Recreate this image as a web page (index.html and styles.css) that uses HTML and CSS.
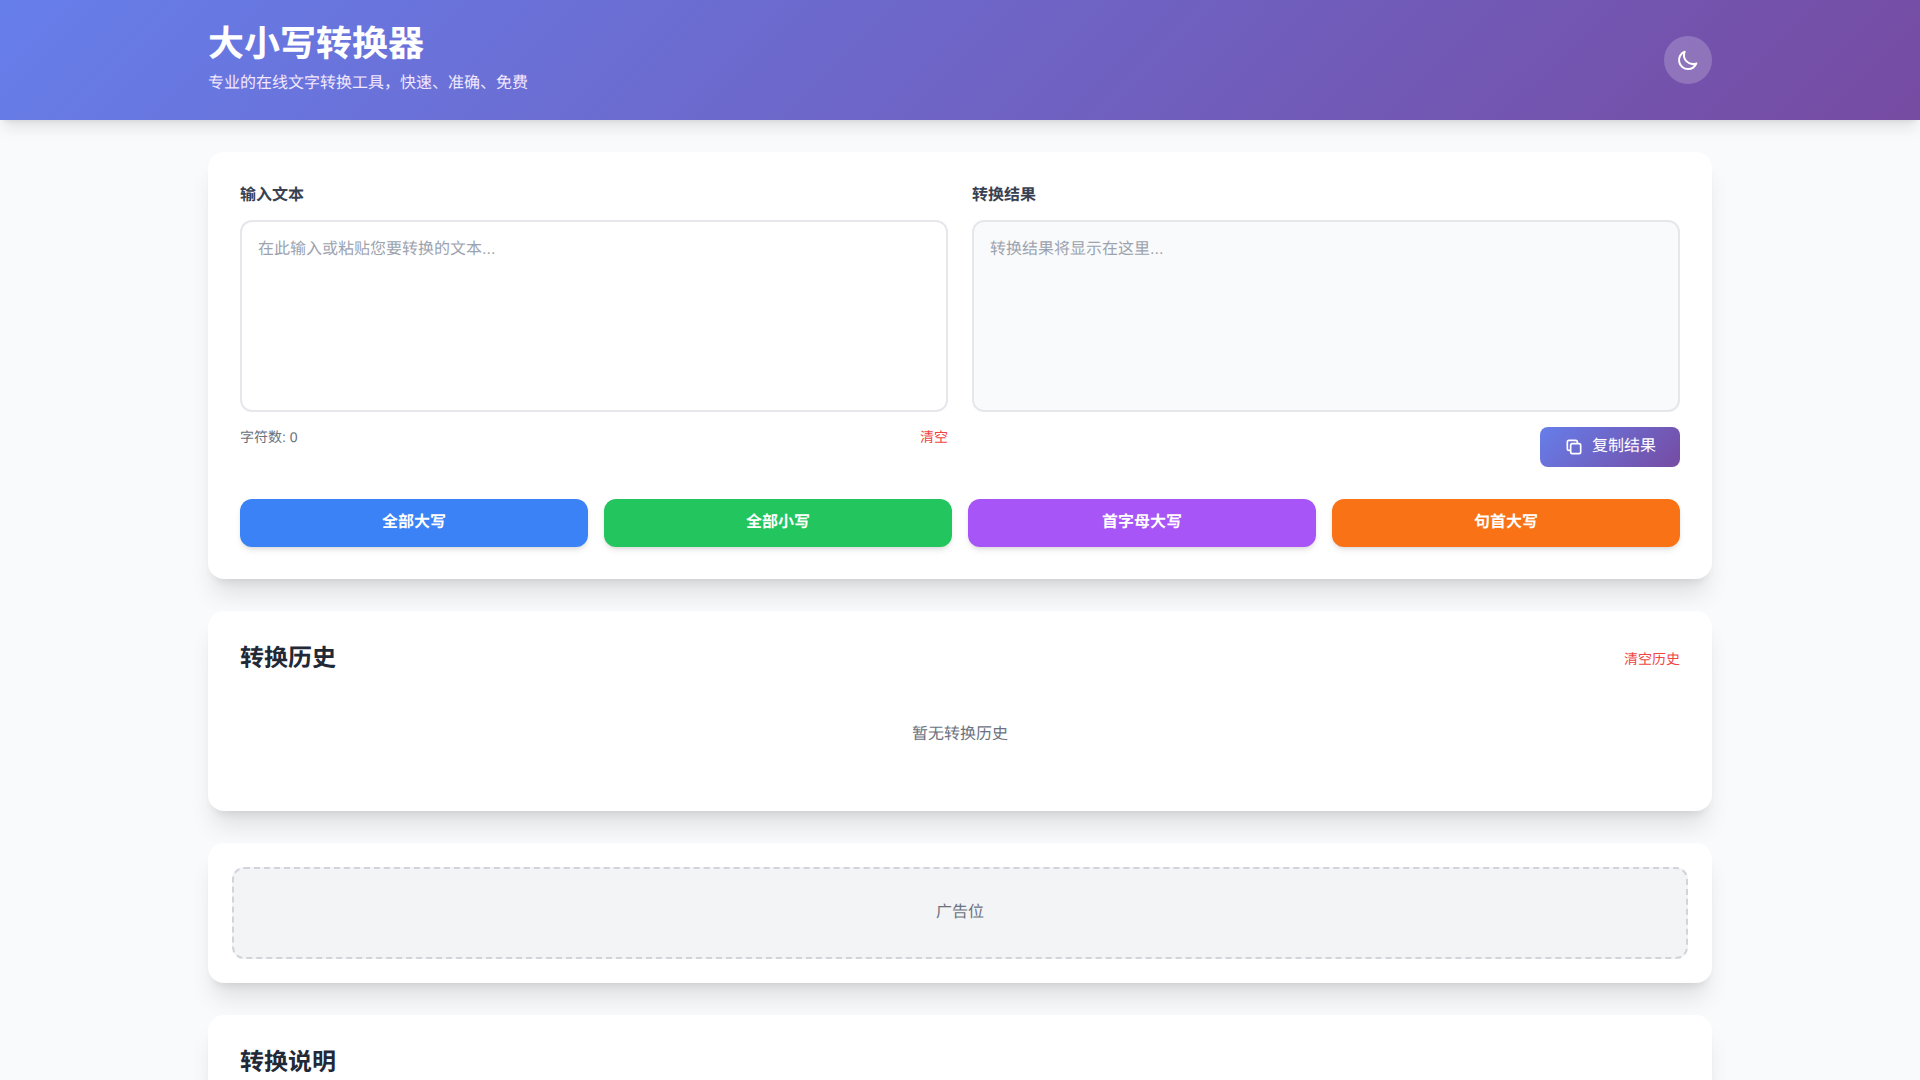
FILE: index.html
```html
<!DOCTYPE html>
<html lang="zh-CN">
<head>
<meta charset="utf-8">
<meta name="viewport" content="width=device-width, initial-scale=1">
<title>大小写转换器</title>
<link rel="stylesheet" href="styles.css">
</head>
<body>
<header class="site-header">
  <div class="container header-row">
    <div>
      <h1 class="site-title">大小写转换器</h1>
      <p class="site-tagline">专业的在线文字转换工具，快速、准确、免费</p>
    </div>
    <button class="theme-toggle" type="button" aria-label="切换主题">
      <svg class="icon-moon" viewBox="0 0 24 24" fill="none" stroke="currentColor" stroke-width="2" stroke-linecap="round" stroke-linejoin="round" aria-hidden="true"><path d="M20.354 15.354A9 9 0 018.646 3.646 9.003 9.003 0 0012 21a9.003 9.003 0 008.354-5.646z"/></svg>
    </button>
  </div>
</header>
<main class="container main">
  <section class="card">
    <div class="editor-grid">
      <div>
        <label class="field-label" for="input-text">输入文本</label>
        <textarea class="text-area" id="input-text" placeholder="在此输入或粘贴您要转换的文本..."></textarea>
        <div class="field-footer">
          <span class="char-count">字符数: 0</span>
          <button class="text-button" type="button">清空</button>
        </div>
      </div>
      <div>
        <label class="field-label" for="output-text">转换结果</label>
        <textarea class="text-area text-area-output" id="output-text" placeholder="转换结果将显示在这里..." readonly></textarea>
        <div class="field-footer field-footer-end">
          <button class="copy-button" type="button">
            <svg class="icon-copy" viewBox="0 0 24 24" fill="none" stroke="currentColor" stroke-width="2" stroke-linecap="round" stroke-linejoin="round" aria-hidden="true"><path d="M8 16H6a2 2 0 01-2-2V6a2 2 0 012-2h8a2 2 0 012 2v2m-6 12h8a2 2 0 002-2v-8a2 2 0 00-2-2h-8a2 2 0 00-2 2v8a2 2 0 002 2z"/></svg>
            <span>复制结果</span>
          </button>
        </div>
      </div>
    </div>
    <div class="actions">
      <button class="action action-blue" type="button">全部大写</button>
      <button class="action action-green" type="button">全部小写</button>
      <button class="action action-purple" type="button">首字母大写</button>
      <button class="action action-orange" type="button">句首大写</button>
    </div>
  </section>
  <section class="card">
    <div class="history-head">
      <h2 class="card-title">转换历史</h2>
      <button class="text-button" type="button">清空历史</button>
    </div>
    <p class="history-empty">暂无转换历史</p>
  </section>
  <aside class="card card-ad">
    <div class="ad-slot">广告位</div>
  </aside>
  <section class="card">
    <h2 class="card-title">转换说明</h2>
  </section>
</main>
</body>
</html>
```

FILE: styles.css
```css
* {
  box-sizing: border-box;
  margin: 0;
  padding: 0;
}

body {
  background: #f9fafb;
  color: #1f2937;
  font: 16px/24px "Liberation Sans", "Noto Sans CJK SC", sans-serif;
  text-rendering: geometricPrecision;
}

button,
textarea {
  font: inherit;
  text-rendering: inherit;
}

button {
  border: 0;
  background: none;
  cursor: pointer;
}

.container {
  width: 100%;
  max-width: 1536px;
  margin: 0 auto;
  padding: 0 16px;
}

.site-header {
  padding: 24px 0;
  background: linear-gradient(135deg, #667eea 0%, #764ba2 100%);
  color: #fff;
  box-shadow: 0 10px 15px -3px rgba(0, 0, 0, .1), 0 4px 6px -4px rgba(0, 0, 0, .1);
}

.header-row,
.history-head,
.field-footer {
  display: flex;
  align-items: center;
  justify-content: space-between;
}

.site-title {
  font-size: 36px;
  line-height: 40px;
  font-weight: 700;
}

.site-tagline {
  margin-top: 8px;
  color: #f3e8ff;
}

.theme-toggle {
  display: flex;
  padding: 12px;
  border-radius: 50%;
  background: rgba(255, 255, 255, .2);
  color: #fff;
}

.icon-moon {
  width: 24px;
  height: 24px;
}

.main {
  display: grid;
  gap: 32px;
  padding-top: 32px;
  padding-bottom: 32px;
}

.card {
  padding: 32px;
  border-radius: 16px;
  background: #fff;
  box-shadow: 0 20px 25px -5px rgba(0, 0, 0, .1), 0 8px 10px -6px rgba(0, 0, 0, .1);
}

.editor-grid {
  display: grid;
  grid-template-columns: 1fr 1fr;
  gap: 24px;
  margin-bottom: 32px;
}

.field-label {
  display: block;
  margin-bottom: 12px;
  color: #374151;
  font-weight: 600;
}

.text-area {
  display: block;
  width: 100%;
  height: 192px;
  padding: 16px;
  border: 2px solid #e5e7eb;
  border-radius: 12px;
  background: #fff;
  color: #1f2937;
  resize: none;
}

.text-area::placeholder {
  color: #9ca3af;
}

.text-area-output {
  background: #f9fafb;
}

.field-footer {
  margin-top: 15px;
}

.field-footer-end {
  justify-content: flex-end;
}

.char-count {
  color: #6b7280;
  font-size: 14px;
  line-height: 20px;
}

.text-button {
  color: #ef4444;
  font-size: 14px;
  line-height: 20px;
}

.copy-button {
  display: flex;
  align-items: center;
  gap: 8px;
  padding: 8px 24px;
  border-radius: 8px;
  background: linear-gradient(135deg, #667eea 0%, #764ba2 100%);
  color: #fff;
}

.icon-copy {
  width: 20px;
  height: 20px;
}

.actions {
  display: grid;
  grid-template-columns: repeat(4, 1fr);
  gap: 16px;
}

.action {
  padding: 12px 24px;
  border-radius: 12px;
  color: #fff;
  font-weight: 600;
  box-shadow: 0 4px 6px -1px rgba(0, 0, 0, .1), 0 2px 4px -2px rgba(0, 0, 0, .1);
}

.action-blue {
  background: #3b82f6;
}

.action-green {
  background: #22c55e;
}

.action-purple {
  background: #a855f7;
}

.action-orange {
  background: #f97316;
}

.history-head {
  margin-bottom: 16px;
}

.card-title {
  font-size: 24px;
  line-height: 32px;
  font-weight: 700;
}

.history-empty {
  padding: 32px 0;
  color: #6b7280;
  text-align: center;
}

.card-ad {
  padding: 24px;
}

.ad-slot {
  padding: 32px;
  border: 2px dashed #d1d5db;
  border-radius: 12px;
  background: #f3f4f6;
  color: #6b7280;
  text-align: center;
}
```
